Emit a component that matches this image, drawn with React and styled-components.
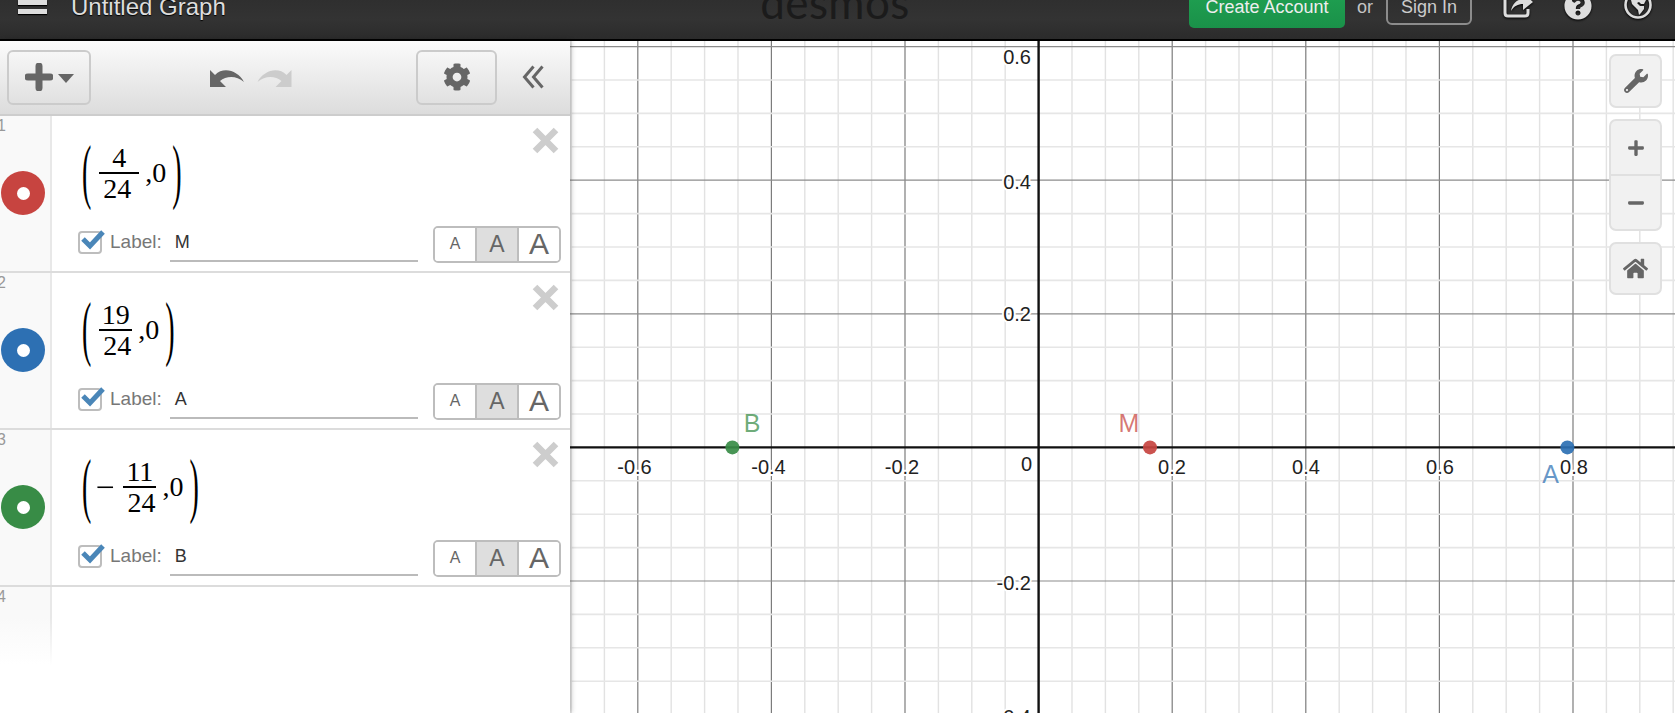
import React from 'react';
import styled, { createGlobalStyle } from 'styled-components';
import { FaCog, FaWrench, FaPlus, FaMinus, FaHome, FaQuestionCircle } from 'react-icons/fa';

const GlobalStyle = createGlobalStyle`
  html, body {
    margin: 0;
    height: 100%;
    overflow: hidden;
    background: #fff;
    font-family: "Liberation Sans", Arial, sans-serif;
  }
`;

const Page = styled.div`
  display: flex;
  flex-direction: column;
  height: 713px;
  overflow: hidden;
`;

// header is cropped at the top of the screenshot, so its row sits around y=7
const Header = styled.header`
  flex: none;
  box-sizing: border-box;
  height: 41px;
  border-bottom: 2px solid #000;
  background: linear-gradient(#2f2f2f, #333 50%, #2b2b2b);
  overflow: hidden;
`;

const HeaderRow = styled.div`
  display: grid;
  grid-template-columns: 1fr auto 1fr;
  grid-template-rows: 14px;
  align-items: center;
  height: 14px;
`;

const HeaderLeft = styled.div`
  display: flex;
  align-items: center;
  height: 14px;
  padding-left: 18px;
`;

const HeaderRight = styled.div`
  display: flex;
  align-items: center;
  justify-content: flex-end;
  height: 14px;
  padding-right: 23px;
`;

const Hamburger = styled.div`
  display: flex;
  flex-direction: column;
  gap: 4.5px;
  width: 29px;

  span {
    height: 5px;
    background: #ddd;
    box-shadow: 0 1px 1px #000;
  }
`;

const Title = styled.div`
  margin-left: 24px;
  font-size: 24px;
  line-height: 28px;
  color: #ddd;
  text-shadow: 0 1px 1px #000;
  white-space: nowrap;
`;

const Logo = styled.div`
  width: 150px;
  height: 14px;
  margin-right: 5px;
  font-family: Lato, sans-serif;
  font-size: 44px;
  font-weight: 400;
  line-height: 14px;
  letter-spacing: 0.4px;
  text-align: center;
  color: #1b1b1b;
  transform: translateY(-5px);
`;

const CreateAccount = styled.div`
  flex: none;
  display: flex;
  align-items: center;
  justify-content: center;
  width: 156px;
  height: 41px;
  border-radius: 5px;
  background: linear-gradient(#20a252, #1a9149);
  color: #eee;
  font-size: 18px;
`;

const Or = styled.span`
  margin-left: 12px;
  font-size: 18px;
  color: #c4c4c4;
`;

const SignIn = styled.div`
  flex: none;
  box-sizing: border-box;
  display: flex;
  align-items: center;
  justify-content: center;
  width: 86px;
  height: 36px;
  margin-left: 13px;
  border: 2px solid #8c8c8c;
  border-radius: 6px;
  color: #ccc;
  font-size: 18px;
`;

const HeaderIcon = styled.div`
  flex: none;
  display: flex;
  margin-left: ${p => p.$left}px;
  transform: translateY(${p => p.$shift}px);
  color: #ddd;
  filter: drop-shadow(0 1px 1px #000);
`;

const Main = styled.div`
  flex: 1;
  display: flex;
  min-height: 0;
`;

const Panel = styled.aside`
  position: relative;
  z-index: 2;
  flex: none;
  display: flex;
  flex-direction: column;
  width: 570px;
  background: #fff;
  box-shadow: 1px 0 5px rgba(0, 0, 0, 0.28);
`;

const Toolbar = styled.div`
  flex: none;
  box-sizing: border-box;
  display: flex;
  align-items: center;
  height: 75px;
  padding: 0 25px 1px 7px;
  border-bottom: 2px solid #cdcdcd;
  background: linear-gradient(#fbfbfb, #dcdcdc);
`;

const ToolButton = styled.div`
  box-sizing: border-box;
  display: flex;
  align-items: center;
  justify-content: center;
  gap: 5px;
  width: ${p => p.$width}px;
  height: 55px;
  border: 2px solid #cbcbcb;
  border-radius: 6px;
  color: #666;
`;

const History = styled.div`
  display: flex;
  gap: 13px;
  margin-left: 119px;
`;

const SettingsSlot = styled.div`
  margin-left: auto;
  margin-right: 25px;
`;

const Row = styled.div`
  flex: none;
  box-sizing: border-box;
  display: flex;
  height: 157px;
  border-bottom: 2px solid #dcdcdc;
`;

const Gutter = styled.div`
  flex: none;
  box-sizing: border-box;
  width: 52px;
  border-right: 2px solid #e8e8e8;
  background: #f9f9f9;
`;

const FadingGutter = styled(Gutter)`
  height: 78px;
  background: linear-gradient(#f9f9f9 40%, #fff);
  border-image: linear-gradient(#e8e8e8 40%, #fff) 1;
`;

const RowNumber = styled.div`
  margin-left: -3px;
  font-size: 16px;
  line-height: 20px;
  color: #999;
`;

const ColorDot = styled.div`
  display: flex;
  align-items: center;
  justify-content: center;
  width: 44px;
  height: 44px;
  margin: 35px 0 0 1px;
  border-radius: 50%;
  background: ${p => p.$color};

  &::after {
    content: '';
    width: 13px;
    height: 13px;
    border-radius: 50%;
    background: #fff;
  }
`;

const RowBody = styled.div`
  flex: 1;
  min-width: 0;
  padding: 23px 9px 0 26px;
`;

const MathLine = styled.div`
  display: flex;
  justify-content: space-between;
  align-items: flex-start;
  height: 68px;
  padding-left: 4px;
`;

const Formula = styled.div`
  display: flex;
  align-items: center;
  height: 68px;
  font-family: "Liberation Serif", "Times New Roman", serif;
  font-size: 28px;
  color: #000;
`;

// same trick MathQuill uses: a text paren stretched vertically
const Paren = styled.span`
  display: block;
  margin-left: ${p => p.$left || 0}px;
  font-size: 28px;
  line-height: 28px;
  transform: translateY(-1px) scaleY(2.6);
`;

const MinusSign = styled.span`
  display: block;
  margin: 0 9px 0 5px;
  font-size: 32px;
  line-height: 28px;
  font-weight: 400;
  transform: scaleX(1.05);
`;

const Fraction = styled.div`
  display: flex;
  flex-direction: column;
  width: ${p => p.$width}px;
  margin: 0 6px 0 ${p => p.$left}px;
`;

const Numerator = styled.div`
  height: 29px;
  line-height: 29px;
  text-align: center;
  border-bottom: 2px solid #000;
`;

const Denominator = styled.div`
  height: 29px;
  line-height: 29px;
  padding-left: 4px;
`;

const CloseIcon = styled.svg`
  flex: none;
  width: 27px;
  height: 27px;
  margin: -12px 2px 0 0;
`;

const LabelRow = styled.div`
  display: flex;
  align-items: center;
  height: 36px;
  margin-top: 19px;
`;

const CheckBox = styled.div`
  position: relative;
  flex: none;
  box-sizing: border-box;
  width: 24px;
  height: 23px;
  margin-bottom: 3px;
  border: 2px solid #bdbdbd;
  border-radius: 4px;
  background: #fff;

  svg {
    position: absolute;
    left: 0;
    top: -4px;
    width: 27px;
    height: 22px;
  }
`;

const LabelText = styled.span`
  margin: 0 0 4px 8px;
  font-size: 19px;
  color: #777;
`;

const LabelInput = styled.div`
  box-sizing: border-box;
  width: 248px;
  height: 36px;
  margin-left: 8px;
  padding: 3px 0 0 5px;
  border-bottom: 2px solid #bbb;
  font-size: 18px;
  line-height: 26px;
  color: #333;
`;

const SizeGroup = styled.div`
  box-sizing: border-box;
  display: flex;
  width: 128px;
  height: 37px;
  margin-left: auto;
  border: 2px solid #bdbdbd;
  border-radius: 5px;
  overflow: hidden;
`;

const SizeCell = styled.div`
  flex: 1;
  display: flex;
  align-items: center;
  justify-content: center;
  font-size: ${p => p.$size}px;
  color: #666;
  background: ${p => (p.$active ? '#dedede' : '#fff')};
  & + & {
    border-left: 2px solid #bdbdbd;
  }
`;

const EmptyRow = styled.div`
  display: flex;
  flex: 1;
`;

const GraphArea = styled.main`
  position: relative;
  flex: 1;
  min-width: 0;
  overflow: hidden;
  background: #fff;
`;

const GraphSvg = styled.svg`
  display: block;
  width: 1105px;
  height: 672px;
`;

const AxisLabel = styled.text`
  font-family: "Liberation Sans", Arial, sans-serif;
  font-size: 20px;
  fill: #222;
  stroke: #fff;
  stroke-width: 4px;
  paint-order: stroke;
`;

const PointLabel = styled.text`
  font-family: "Liberation Sans", Arial, sans-serif;
  font-size: 25px;
  text-anchor: middle;
  fill: ${p => p.$color};
  fill-opacity: 0.72;
`;

const GraphControls = styled.div`
  position: absolute;
  top: 13px;
  right: 13px;
  display: flex;
  flex-direction: column;
  gap: 11px;
  width: 53px;
`;

const ControlGroup = styled.div`
  box-sizing: border-box;
  border: 2px solid #e0e0e0;
  border-radius: 7px;
  background: #f1f1f1;
  overflow: hidden;
`;

const ControlButton = styled.div`
  display: flex;
  align-items: center;
  justify-content: center;
  height: ${p => p.$height}px;
  color: #666;
  & + & {
    border-top: 2px solid #e0e0e0;
  }
`;

const RED = '#c74440';
const BLUE = '#2d70b3';
const GREEN = '#388c46';

const X0 = 1038.6;
const Y0 = 447.4;
const STEP = 33.4;

const expressions = [
  { id: 1, color: RED, num: '4', fracWidth: 40, label: 'M' },
  { id: 2, color: BLUE, num: '19', fracWidth: 33, label: 'A' },
  { id: 3, color: GREEN, num: '11', fracWidth: 33, label: 'B', negative: true },
];

const points = [
  { name: 'B', color: GREEN, x: 732.4, labelX: 752, labelY: 431.5 },
  { name: 'M', color: RED, x: 1150, labelX: 1129, labelY: 431.5 },
  { name: 'A', color: BLUE, x: 1567.4, labelX: 1550.5, labelY: 482.5 },
];

const xLabels = [
  ['-0.6', 634.5], ['-0.4', 768.5], ['-0.2', 902], ['0.2', 1172], ['0.4', 1306], ['0.6', 1440], ['0.8', 1574],
];

const yLabels = [['0.6', 63.5], ['0.4', 188.5], ['0.2', 321], ['-0.2', 590], ['-0.4', 724]];

function Grid() {
  const lines = [];
  for (let n = -14; n <= 19; n++) {
    const x = X0 + n * STEP;
    if (n === 0 || x < 570) continue;
    const major = n % 4 === 0;
    lines.push(
      <line key={'v' + n} x1={x} x2={x} y1={41} y2={713} stroke={major ? '#7c7c7c' : '#e2e2e2'} strokeWidth={major ? 1.2 : 1.4} />
    );
  }
  for (let n = -13; n <= 8; n++) {
    const y = Y0 + n * STEP;
    if (n === 0 || y < 41) continue;
    const major = n % 4 === 0;
    lines.push(
      <line key={'h' + n} x1={570} x2={1675} y1={y} y2={y} stroke={major ? '#8c8c8c' : '#e6e6e6'} strokeWidth={major ? 1.2 : 1.6} />
    );
  }
  return <g>{lines}</g>;
}

function Graph() {
  return (
    <GraphSvg viewBox="570 41 1105 672">
      <Grid />
      <line x1={570} x2={1675} y1={Y0} y2={Y0} stroke="#111" strokeWidth={2.4} />
      <line x1={X0} x2={X0} y1={41} y2={713} stroke="#111" strokeWidth={2.4} />
      {xLabels.map(([text, x]) => (
        <AxisLabel key={text} x={x} y={473.5} textAnchor="middle">{text}</AxisLabel>
      ))}
      {yLabels.map(([text, y]) => (
        <AxisLabel key={text} x={1031} y={y} textAnchor="end">{text}</AxisLabel>
      ))}
      <AxisLabel x={1032} y={471} textAnchor="end">0</AxisLabel>
      {points.map(p => (
        <g key={p.name}>
          <circle cx={p.x} cy={Y0} r={7} fill={p.color} fillOpacity={0.92} />
          <PointLabel x={p.labelX} y={p.labelY} $color={p.color}>{p.name}</PointLabel>
        </g>
      ))}
    </GraphSvg>
  );
}

function Expression({ item }) {
  return (
    <Row>
      <Gutter>
        <RowNumber>{item.id}</RowNumber>
        <ColorDot $color={item.color} />
      </Gutter>
      <RowBody>
        <MathLine>
          <Formula>
            <Paren>(</Paren>
            {item.negative && <MinusSign>−</MinusSign>}
            <Fraction $width={item.fracWidth} $left={item.negative ? 0 : 8}>
              <Numerator>{item.num}</Numerator>
              <Denominator>24</Denominator>
            </Fraction>
            <span>,0</span>
            <Paren $left={6}>)</Paren>
          </Formula>
          <CloseIcon viewBox="0 0 27 27">
            <path d="M3 3 L24 24 M24 3 L3 24" stroke="#cdcdcd" strokeWidth="6.5" fill="none" />
          </CloseIcon>
        </MathLine>
        <LabelRow>
          <CheckBox>
            <svg viewBox="0 0 27 22">
              <path d="M3 10 L10 17 L23 3" stroke="#4a86b8" strokeWidth="5" fill="none" />
            </svg>
          </CheckBox>
          <LabelText>Label:</LabelText>
          <LabelInput>{item.label}</LabelInput>
          <SizeGroup>
            <SizeCell $size={16}>A</SizeCell>
            <SizeCell $size={23} $active>A</SizeCell>
            <SizeCell $size={30}>A</SizeCell>
          </SizeGroup>
        </LabelRow>
      </RowBody>
    </Row>
  );
}

function App() {
  return (
    <Page>
      <GlobalStyle />
      <Header>
        <HeaderRow>
          <HeaderLeft>
            <Hamburger><span /><span /></Hamburger>
            <Title>Untitled Graph</Title>
          </HeaderLeft>
          <Logo>desmos</Logo>
          <HeaderRight>
            <CreateAccount>Create Account</CreateAccount>
            <Or>or</Or>
            <SignIn>Sign In</SignIn>
            <HeaderIcon $left={31} $shift={-2}>
              <svg width="30" height="30" viewBox="0 0 30 30">
                <path d="M13 6 H5 Q2 6 2 9 V23 Q2 26 5 26 H22 Q25 26 25 23 V19" fill="none" stroke="currentColor" strokeWidth="3" />
                <path d="M8 21 C9 14 14 9 20 9 V3 L30 12 L20 20 V14 C15 14 11 16 8 21 Z" fill="currentColor" />
              </svg>
            </HeaderIcon>
            <HeaderIcon $left={31} $shift={-1}><FaQuestionCircle size={28} /></HeaderIcon>
            <HeaderIcon $left={32} $shift={-2}>
              <svg width="28" height="28" viewBox="0 0 28 28">
                <circle cx="14" cy="14" r="12.5" fill="none" stroke="currentColor" strokeWidth="2.6" />
                <path d="M10 5 L17 4 L19 8 L22 9 L20 13 L17 13 L15 11 L13 12 L16 15 L20 15 L20 18 L17 22 L15 24 L14 19 L11 16 L8 13 L7 9 Z" fill="currentColor" />
              </svg>
            </HeaderIcon>
          </HeaderRight>
        </HeaderRow>
      </Header>
      <Main>
        <Panel>
          <Toolbar>
            <ToolButton $width={84}>
              <svg width="28" height="28" viewBox="0 0 28 28">
                <path d="M14 3 V25 M3 14 H25" stroke="currentColor" strokeWidth="7" strokeLinecap="round" fill="none" />
              </svg>
              <svg width="16" height="9" viewBox="0 0 16 9" style={{ marginTop: 3 }}>
                <path d="M0 0 H16 L8 9 Z" fill="currentColor" />
              </svg>
            </ToolButton>
            <History>
              <svg width="34" height="19" viewBox="0 0 34 19">
                <path d="M0 2 L0 19 L16 19 L10 13 C16 8 26 7 34 14 C28 3 14 -2 5 7 Z" fill="#666" />
              </svg>
              <svg width="35" height="19" viewBox="0 0 34 19">
                <path d="M34 2 L34 19 L18 19 L24 13 C18 8 8 7 0 14 C6 3 20 -2 29 7 Z" fill="#ccc" />
              </svg>
            </History>
            <SettingsSlot>
              <ToolButton $width={81}><FaCog size={28} /></ToolButton>
            </SettingsSlot>
            <svg width="23" height="24" viewBox="0 0 23 24">
              <path d="M11.5 1.5 L2.5 12 L11.5 22.5 M20.5 1.5 L11.5 12 L20.5 22.5" stroke="#666" strokeWidth="3" fill="none" />
            </svg>
          </Toolbar>
          {expressions.map(item => (
            <Expression key={item.id} item={item} />
          ))}
          <EmptyRow>
            <FadingGutter>
              <RowNumber>4</RowNumber>
            </FadingGutter>
          </EmptyRow>
        </Panel>
        <GraphArea>
          <Graph />
          <GraphControls>
            <ControlGroup>
              <ControlButton $height={50}><FaWrench size={24} /></ControlButton>
            </ControlGroup>
            <ControlGroup>
              <ControlButton $height={53}><FaPlus size={18} /></ControlButton>
              <ControlButton $height={53}><FaMinus size={18} /></ControlButton>
            </ControlGroup>
            <ControlGroup>
              <ControlButton $height={49}><FaHome size={25} /></ControlButton>
            </ControlGroup>
          </GraphControls>
        </GraphArea>
      </Main>
    </Page>
  );
}

export default App;
